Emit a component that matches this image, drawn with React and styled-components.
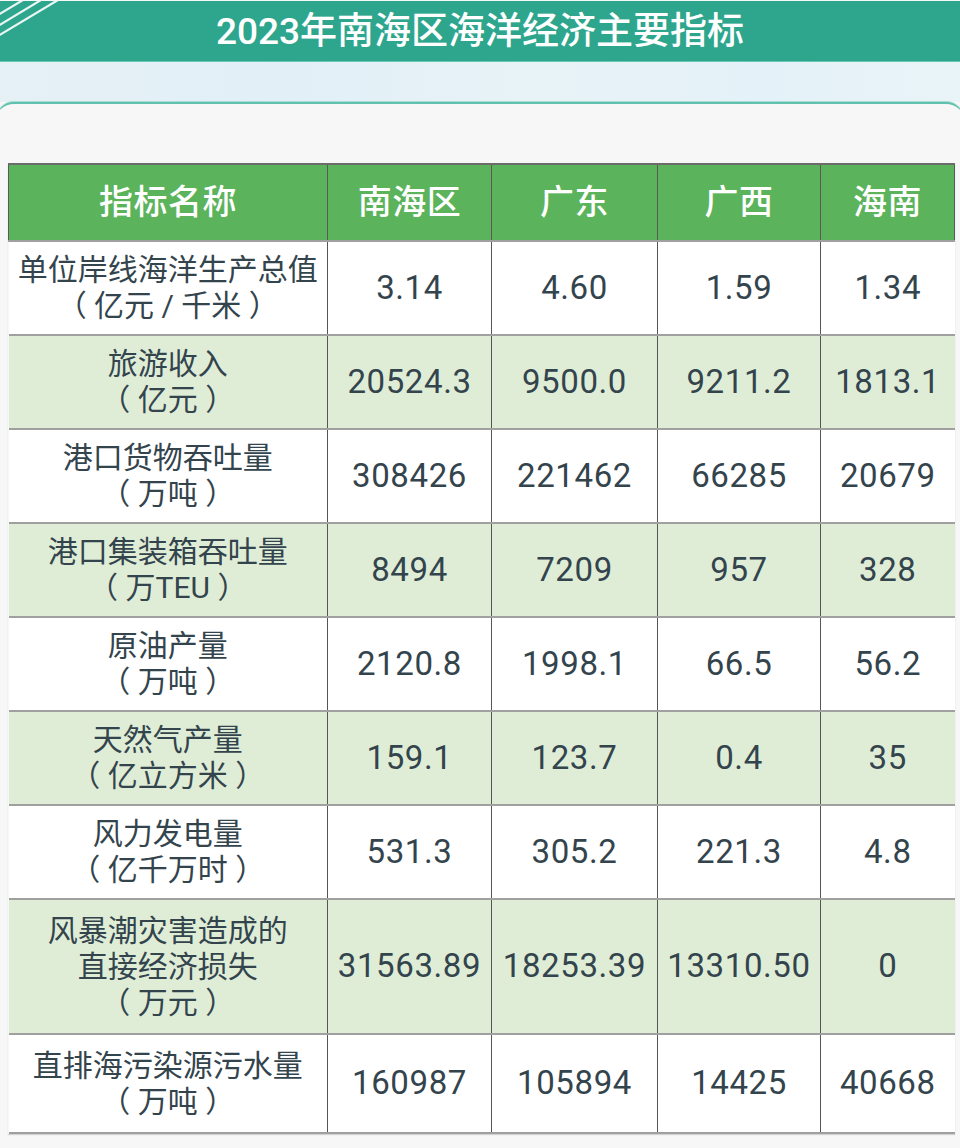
import React from "react";
import styled, { createGlobalStyle } from "styled-components";

const Global = createGlobalStyle`
  html, body { margin: 0; padding: 0; background: #f7f7f7; }
  body { font-family: Roboto, "Noto Sans CJK SC", sans-serif; overflow: hidden; }
`;

const Page = styled.div`
  width: 960px;
  height: 1148px;
  background: #f7f7f7;
  overflow: hidden;
`;

const TitleBar = styled.header`
  position: relative;
  height: 60px;
  margin-top: 1px;
  background: #2ea68e;
  border-bottom: 1px solid #6cc6b4;
  display: flex;
  align-items: center;
  justify-content: center;
`;

const Title = styled.h1`
  margin: 0;
  color: #ffffff;
  font-family: Roboto, "Noto Sans CJK SC", sans-serif;
  font-size: 37px;
  font-weight: 500;
  letter-spacing: 0;
  line-height: 1;
  padding-left: 0;
`;

const Stripes = styled.svg`
  position: absolute;
  left: 0;
  top: 0;
`;

const Band = styled.div`
  height: 40px;
  background: linear-gradient(90deg, #e6f1f6 0%, #e2eff7 30%, #e8f3f7 55%, #e4f1f8 80%, #e9f4f8 100%);
`;

const Card = styled.section`
  margin: 0 -4px;
  padding: 59px 10px 0 12px;
  background: #f7f7f7;
  border-top: 2px solid #62c1ae;
  border-radius: 18px 18px 0 0;
  box-shadow: 0 -1px 0 #a8ddd2;
`;

const Table = styled.table`
  width: 946px;
  border-collapse: collapse;
  table-layout: fixed;
  font-family: Roboto, "Noto Sans CJK SC", sans-serif;
  color: #33444d;
  box-shadow: 0 1px 1px rgba(0,0,0,0.15);
`;

const HeadRow = styled.tr`
  height: 77px;
  background: #5bb35b;
`;

const Th = styled.th`
  border: 1px solid #5a5a5a;
  border-top: 2px solid #6b6b6b;
  color: #ffffff;
  font-size: 34px;
  font-weight: 500;
  text-align: center;
  padding: 0 0 6px;
  letter-spacing: 0.5px;
`;

const Row = styled.tr`
  height: ${(p) => p.$h}px;
  background: ${(p) => (p.$alt ? "#dfedd7" : "#ffffff")};
`;

const NameCell = styled.td`
  border-right: 1px solid #555;
  border-top: 2px solid #a0a0a0;
  border-bottom: 2px solid #a0a0a0;
  font-size: 30px;
  line-height: 36px;
  text-align: center;
  padding: 0 4px 0;
  white-space: pre;
`;

const Cell = styled.td`
  border-left: 1px solid #555;
  border-right: 1px solid #555;
  border-top: 2px solid #a0a0a0;
  border-bottom: 2px solid #a0a0a0;
  font-size: 33px;
  letter-spacing: 0.6px;
  text-align: center;
  padding: 0 0 2px;
  &:last-child { border-right: none; }
`;

const Line = styled.div``;

const cols = [319, 164, 166, 163, 134];

const rows = [
  { name: ["单位岸线海洋生产总值", "（ 亿元 / 千米 ）"], v: ["3.14", "4.60", "1.59", "1.34"], h: 94 },
  { name: ["旅游收入", "（ 亿元 ）"], v: ["20524.3", "9500.0", "9211.2", "1813.1"], h: 94 },
  { name: ["港口货物吞吐量", "（ 万吨 ）"], v: ["308426", "221462", "66285", "20679"], h: 94 },
  { name: ["港口集装箱吞吐量", "（ 万TEU ）"], v: ["8494", "7209", "957", "328"], h: 94 },
  { name: ["原油产量", "（ 万吨 ）"], v: ["2120.8", "1998.1", "66.5", "56.2"], h: 94 },
  { name: ["天然气产量", "（ 亿立方米 ）"], v: ["159.1", "123.7", "0.4", "35"], h: 94 },
  { name: ["风力发电量", "（ 亿千万时 ）"], v: ["531.3", "305.2", "221.3", "4.8"], h: 94 },
  { name: ["风暴潮灾害造成的", "直接经济损失", "（ 万元 ）"], v: ["31563.89", "18253.39", "13310.50", "0"], h: 135 },
  { name: ["直排海污染源污水量", "（ 万吨 ）"], v: ["160987", "105894", "14425", "40668"], h: 99 },
];

export default function App() {
  return (
    <Page>
      <Global />
      <TitleBar>
        <Stripes width="70" height="40" viewBox="0 0 70 40">
          <line x1="-2" y1="35" x2="58" y2="-1" stroke="#eaf6f3" strokeWidth="2.2" />
          <line x1="-2" y1="25" x2="41" y2="-1" stroke="#eaf6f3" strokeWidth="2.2" />
          <line x1="-2" y1="14" x2="23" y2="-1" stroke="#eaf6f3" strokeWidth="2.2" />
        </Stripes>
        <Title>2023年南海区海洋经济主要指标</Title>
      </TitleBar>
      <Band />
      <Card>
        <Table>
          <colgroup>
            {cols.map((w, i) => (
              <col key={i} style={{ width: w }} />
            ))}
          </colgroup>
          <thead>
            <HeadRow>
              <Th>指标名称</Th>
              <Th>南海区</Th>
              <Th>广东</Th>
              <Th>广西</Th>
              <Th>海南</Th>
            </HeadRow>
          </thead>
          <tbody>
            {rows.map((r, i) => (
              <Row key={i} $h={r.h} $alt={i % 2 === 1}>
                <NameCell>
                  {r.name.map((l, j) => (
                    <Line key={j}>{l}</Line>
                  ))}
                </NameCell>
                {r.v.map((v, j) => (
                  <Cell key={j}>{v}</Cell>
                ))}
              </Row>
            ))}
          </tbody>
        </Table>
      </Card>
    </Page>
  );
}
